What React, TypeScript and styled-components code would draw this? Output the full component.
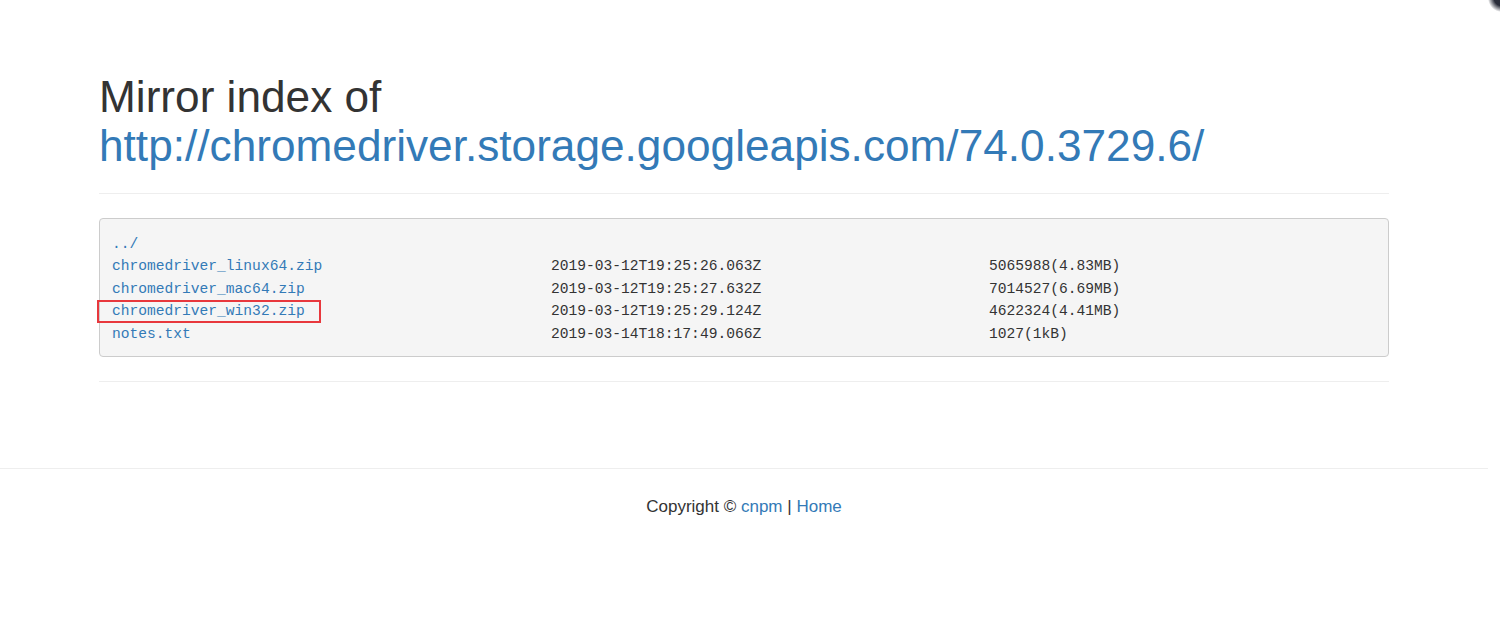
import React from "react";
import styled, { createGlobalStyle } from "styled-components";

const Global = createGlobalStyle`
  html, body { margin: 0; padding: 0; background: #fff; }
  body {
    width: 1488px;
    font-family: "Liberation Sans", Arial, sans-serif;
    color: #333;
  }
`;

const Container = styled.div`
  width: 1290px;
  margin: 0 auto;
`;

const Header = styled.div`
  padding-top: 72px;
  padding-bottom: 23px;
  border-bottom: 1px solid #eee;
`;

const Title = styled.h1`
  margin: 0;
  font-size: 44.2px;
  line-height: 49px;
  font-weight: 400;
  color: #333;
`;

const Link = styled.a<{ $marked?: boolean }>`
  color: #337ab7;
  text-decoration: none;
  ${(p) =>
    p.$marked &&
    `
    display: inline-block;
    line-height: 19px;
    outline: 2px solid #e8383d;
    padding: 0 14px 0 13px;
    margin-left: -13px;
  `}
`;

const Listing = styled.pre`
  margin: 24px 0 24px;
  padding: 13.5px 12px 10.5px;
  background: #f5f5f5;
  border: 1px solid #ccc;
  border-radius: 4px;
  font-family: "Consolas", "Liberation Mono", monospace;
  font-size: 14.6px;
  line-height: 22.5px;
  color: #333;
`;

const Row = styled.div`
  display: grid;
  grid-template-columns: 439px 438px 1fr;
  height: 22.5px;
`;

const Cell = styled.span``;

const Rule = styled.hr`
  margin: 0;
  border: 0;
  border-top: 1px solid #eee;
`;

const Footer = styled.footer`
  margin-top: 86px;
  border-top: 1px solid #eee;
  padding-top: 28px;
  text-align: center;
  font-size: 17px;
  line-height: 20px;
  color: #333;
  height: 140px;
`;

const Corner = styled.div`
  position: fixed;
  top: -16px;
  right: -16px;
  width: 28px;
  height: 28px;
  border-radius: 50%;
  background: radial-gradient(circle, #2a2d3a 40%, rgba(42,45,58,0) 72%);
`;

const rows = [
  { name: "chromedriver_linux64.zip", date: "2019-03-12T19:25:26.063Z", size: "5065988(4.83MB)" },
  { name: "chromedriver_mac64.zip", date: "2019-03-12T19:25:27.632Z", size: "7014527(6.69MB)" },
  { name: "chromedriver_win32.zip", date: "2019-03-12T19:25:29.124Z", size: "4622324(4.41MB)", marked: true },
  { name: "notes.txt", date: "2019-03-14T18:17:49.066Z", size: "1027(1kB)" },
];

export default function App() {
  return (
    <>
      <Global />
      <Corner />
      <Container>
        <Header>
          <Title>
            Mirror index of
            <br />
            <Link href="#">http://chromedriver.storage.googleapis.com/74.0.3729.6/</Link>
          </Title>
        </Header>
        <Listing>
          <Row>
            <Cell>
              <Link href="#">../</Link>
            </Cell>
          </Row>
          {rows.map((r) => (
            <Row key={r.name}>
              <Cell>
                <Link href="#" $marked={r.marked}>
                  {r.name}
                </Link>
              </Cell>
              <Cell>{r.date}</Cell>
              <Cell>{r.size}</Cell>
            </Row>
          ))}
        </Listing>
        <Rule />
      </Container>
      <Footer>
        Copyright © <Link href="#">cnpm</Link> | <Link href="#">Home</Link>
      </Footer>
    </>
  );
}
